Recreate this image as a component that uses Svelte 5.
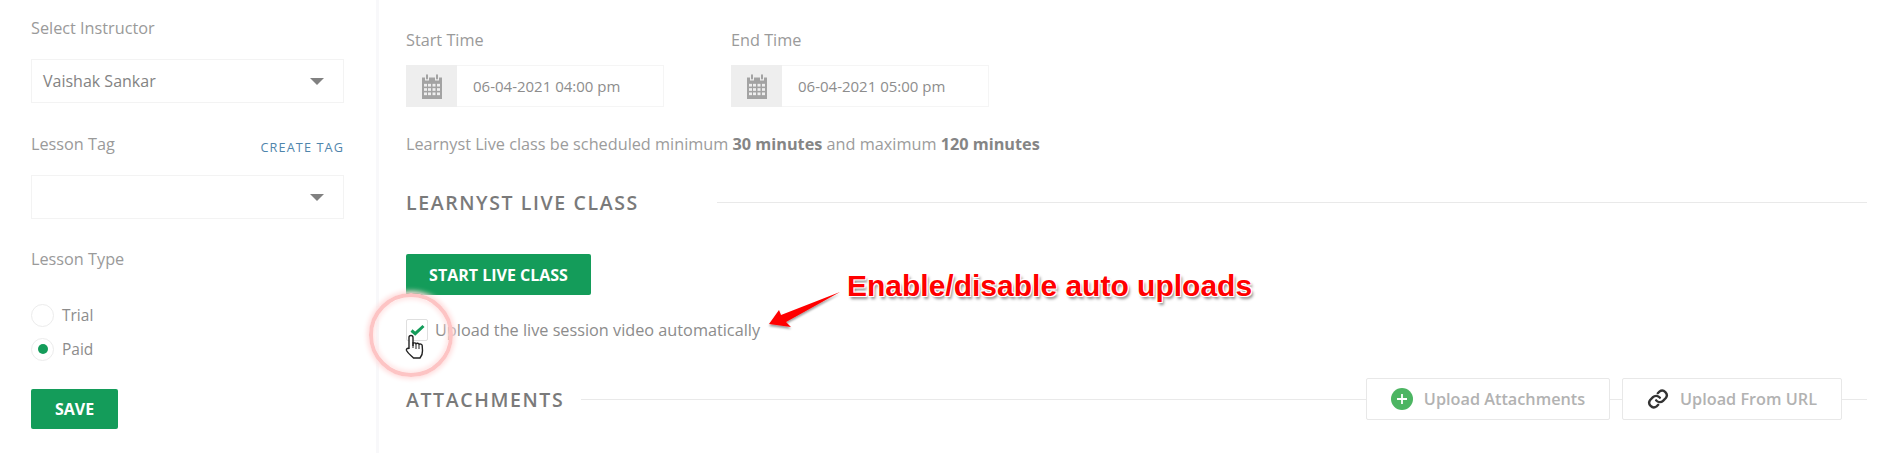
<script>
  let instructor = 'Vaishak Sankar';
  const times = [
    { label: 'Start Time', value: '06-04-2021 04:00 pm' },
    { label: 'End Time', value: '06-04-2021 05:00 pm' }
  ];
</script>

<div class="page">
  <aside class="sidebar">
    <div class="label first">Select Instructor</div>
    <div class="select">
      <span>{instructor}</span>
      <i class="caret"></i>
    </div>

    <div class="label-row">
      <div class="label">Lesson Tag</div>
      <a class="create-tag" href="#tag">CREATE TAG</a>
    </div>
    <div class="select">
      <span></span>
      <i class="caret"></i>
    </div>

    <div class="label type-label">Lesson Type</div>
    <div class="radios">
      <div class="radio-row"><span class="radio"></span>Trial</div>
      <div class="radio-row"><span class="radio on"></span>Paid</div>
    </div>
    <button class="btn save">SAVE</button>
  </aside>

  <main class="content">
    <div class="times">
      {#each times as t}
        <div class="time-field">
          <div class="label">{t.label}</div>
          <div class="time-input">
            <span class="addon">
              <svg width="22" height="28" viewBox="0 0 22 26" preserveAspectRatio="none" fill="#a3a3a3">
                <path d="M1 5h3v3h4V5h6v3h4V5h3v20H1z" />
                <rect x="5" y="2" width="2" height="5" rx="1" />
                <rect x="15" y="2" width="2" height="5" rx="1" />
                <g fill="#eeeeee">
                  <rect x="3" y="11" width="3" height="2.5" /><rect x="7" y="11" width="3" height="2.5" /><rect x="11.500" y="11" width="3" height="2.500" /><rect x="16" y="11" width="3" height="2.5" />
                  <rect x="3" y="15" width="3" height="2.5" /><rect x="7" y="15" width="3" height="2.5" /><rect x="11.500" y="15" width="3" height="2.500" /><rect x="16" y="15" width="3" height="2.5" />
                  <rect x="3" y="19" width="3" height="2.5" /><rect x="7" y="19" width="3" height="2.5" /><rect x="11.500" y="19" width="3" height="2.500" /><rect x="16" y="19" width="3" height="2.5" />
                </g>
              </svg>
            </span>
            <span class="value">{t.value}</span>
          </div>
        </div>
      {/each}
    </div>

    <p class="note">Learnyst Live class be scheduled minimum <b>30 minutes</b> and maximum <b>120 minutes</b></p>

    <div class="section-head live">
      <h2>LEARNYST LIVE CLASS</h2>
      <span class="rule"></span>
    </div>

    <button class="btn start">START LIVE CLASS</button>

    <div class="check-row">
      <span class="checkbox">
        <svg width="15" height="12" viewBox="0 0 15 12"><path d="M1.500 6.500l3.700 3.200L13.500 2" fill="none" stroke="#149c5a" stroke-width="3" /></svg>
      </span>
      <span>Upload the live session video automatically</span>
    </div>

    <div class="section-head attach">
      <h2>ATTACHMENTS</h2>
      <span class="rule"></span>
      <button class="upload first-upload">
        <svg width="22" height="22" viewBox="0 0 22 22"><circle cx="11" cy="11" r="11" fill="#4cb562" /><path d="M11 6v10M6 11h10" stroke="#fff" stroke-width="1.800" /></svg>
        Upload Attachments
      </button>
      <span class="rule between"></span>
      <button class="upload">
        <svg width="22" height="22" viewBox="0 0 24 24" fill="none" stroke="#333" stroke-width="2.600" stroke-linecap="round"><path d="M10 13.500a5 5 0 0 0 7.500.5l3-3a5 5 0 0 0-7-7l-1.700 1.700" /><path d="M14 10.500a5 5 0 0 0-7.500-.5l-3 3a5 5 0 0 0 7 7l1.700-1.700" /></svg>
        Upload From URL
      </button>
      <span class="rule tail"></span>
    </div>
  </main>

  <!-- screenshot annotation drawn over the page -->
  <div class="ring"></div>
  <svg class="cursor" width="22" height="30" viewBox="0 0 22 30">
    <path d="M6 2.500c1.300 0 2 1 2 2V13l0-2.500c1-1 2.500-.8 3 .2 1-.8 2.500-.5 3 .6 1-.6 3-.2 3.200 1.400l.3 5c.2 3-.8 5-2.500 7.300H8.500C6.500 23 3 20.500 1.500 17.500c-.5-1.500 1-2.800 2.500-1.800l0 .3V4.500c0-1 .8-2 2-2z" fill="#fff" stroke="#222" stroke-width="1.400" />
    <path d="M8 9v6M11 11v5M14 12v4" stroke="#222" stroke-width="1" fill="none" />
  </svg>
  <svg class="arrow" width="80" height="44" viewBox="0 0 80 44">
    <defs>
      <filter id="arrow-shadow" x="-20%" y="-20%" width="140%" height="160%"><feDropShadow dx="0" dy="2" stdDeviation="1.200" flood-color="#000" flood-opacity="0.4" /></filter>
    </defs>
    <path d="M3 34L13 20l2 5 59-23-54 30 5 5z" fill="#ff0000" filter="url(#arrow-shadow)" />
  </svg>
  <div class="callout">Enable/disable auto uploads</div>
</div>

<style>
  :global(body) {
    margin: 0;
    background: #fff;
  }

  .page {
    position: relative;
    display: flex;
    width: 1898px;
    height: 453px;
    overflow: hidden;
    font-family: "Open Sans", sans-serif;
    font-size: 16px;
    color: #8f8f8f;
  }

  .sidebar {
    box-sizing: border-box;
    width: 379px;
    flex: none;
    padding: 0 32px 0 31px;
    border-right: 3px solid #f8f8fa;
  }

  .label {
    font-size: 16.250px;
    line-height: 20px;
    color: #9a9a9a;
  }

  .label.first {
    padding-top: 18px;
    margin-bottom: 21px;
  }

  .label-row {
    display: flex;
    justify-content: space-between;
    align-items: center;
    margin-top: 29px;
    margin-bottom: 19px;
  }

  .create-tag {
    font-size: 12.700px;
    letter-spacing: 1.100px;
    color: #4f85ac;
    text-decoration: none;
    padding-top: 6px;
  }

  .select {
    box-sizing: border-box;
    display: flex;
    justify-content: space-between;
    align-items: center;
    width: 313px;
    height: 44px;
    padding: 0 19px 0 11px;
    border: 1px solid #f3f3f3;
    font-size: 16px;
    color: #838383;
  }

  .caret {
    width: 0;
    height: 0;
    border-left: 7px solid transparent;
    border-right: 7px solid transparent;
    border-top: 7px solid #818181;
  }

  .type-label {
    margin-top: 30px;
  }

  .radios {
    margin-top: 29px;
  }

  .radio-row {
    display: flex;
    align-items: center;
    gap: 8px;
    height: 34px;
    font-size: 15.500px;
    color: #8c8c8c;
  }

  .radio {
    box-sizing: border-box;
    display: flex;
    align-items: center;
    justify-content: center;
    width: 23px;
    height: 23px;
    border: 1px solid #ececec;
    border-radius: 50%;
  }

  .radio.on::after {
    content: "";
    width: 10px;
    height: 10px;
    border-radius: 50%;
    background: #149c5a;
  }

  .btn {
    display: block;
    border: none;
    border-radius: 2px;
    background: #149c5a;
    color: #fff;
    font-family: inherit;
    font-weight: 700;
    font-size: 16px;
    padding: 0;
  }

  .save {
    width: 87px;
    height: 40px;
    margin-top: 23px;
  }

  .content {
    flex: 1;
    min-width: 0;
    box-sizing: border-box;
    padding: 30px 31px 0 27px;
  }

  .times {
    display: flex;
    gap: 67px;
  }

  .time-field {
    width: 258px;
  }

  .time-input {
    display: flex;
    height: 42px;
    margin-top: 15px;
    border: 1px solid #f5f5f5;
    box-sizing: border-box;
  }

  .addon {
    display: flex;
    align-items: center;
    justify-content: center;
    width: 51px;
    margin: -1px 0 -1px -1px;
    background: #eeeeee;
  }

  .value {
    align-self: center;
    padding-left: 16px;
    font-size: 15px;
    color: #8d8d8d;
  }

  .note {
    margin: 26px 0 0;
    line-height: 22px;
    font-size: 16.250px;
    color: #9c9c9c;
  }

  .note b {
    color: #858585;
  }

  .section-head {
    display: flex;
    align-items: center;
  }

  .section-head h2 {
    margin: 0;
    font-size: 19.500px;
    font-weight: 600;
    letter-spacing: 1.600px;
    color: #7a7a7a;
    white-space: nowrap;
  }

  .rule {
    flex: 1;
    height: 1px;
    background: #e9e9e9;
  }

  .live {
    margin-top: 34px;
    height: 26px;
  }

  .live .rule {
    margin-left: 78px;
  }

  .start {
    width: 185px;
    height: 41px;
    margin-top: 39px;
  }

  .check-row {
    display: flex;
    align-items: center;
    gap: 7px;
    margin-top: 24px;
    height: 22px;
    font-size: 16.250px;
    color: #8c8c8c;
  }

  .checkbox {
    box-sizing: border-box;
    display: flex;
    align-items: center;
    justify-content: center;
    width: 22px;
    height: 22px;
    border: 1px solid #dfdfdf;
    border-radius: 2px;
  }

  .attach {
    margin-top: 37px;
    height: 42px;
  }

  .attach h2 {
    margin-right: 17px;
  }

  .rule.between {
    flex: 0 0 12px;
  }

  .rule.tail {
    flex: 0 0 25px;
  }

  .upload {
    box-sizing: border-box;
    display: flex;
    align-items: center;
    justify-content: center;
    gap: 11px;
    height: 42px;
    padding: 0;
    border: 1px solid #e8e8e8;
    border-radius: 2px;
    background: #fff;
    font-family: inherit;
    font-size: 16.250px;
    font-weight: 600;
    color: #b2b2b2;
    width: 220px;
    flex: none;
  }

  .first-upload {
    width: 244px;
  }

  .ring {
    position: absolute;
    left: 369px;
    top: 293px;
    width: 84px;
    height: 84px;
    box-sizing: border-box;
    border-radius: 50%;
    border: 4px solid #fdc4c4;
    box-shadow: 0 0 5px 2px #ffdcdc, inset 0 0 5px 2px #ffe4e4;
  }

  .cursor {
    position: absolute;
    left: 405px;
    top: 333px;
  }

  .arrow {
    position: absolute;
    left: 766px;
    top: 290px;
  }

  .callout {
    position: absolute;
    left: 847px;
    top: 267px;
    font-family: "Liberation Sans", Arial, sans-serif;
    font-weight: 700;
    font-size: 30px;
    line-height: 38px;
    white-space: nowrap;
    color: #ff0000;
    text-shadow: 1px 1px 0 #fff, -1px -1px 0 #fff, 1px -1px 0 #fff, -1px 1px 0 #fff, 2px 3px 3px rgba(0, 0, 0, 0.45);
  }
</style>
